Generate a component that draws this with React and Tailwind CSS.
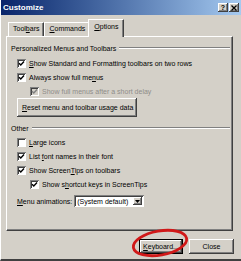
import React from 'react';

// raised / sunken bevels in the Windows classic style
const raised = 'shadow-[inset_-1px_-1px_0_#404040,inset_1px_1px_0_#ffffff,inset_-2px_-2px_0_#808080]';
const sunken = 'shadow-[inset_1px_1px_0_#808080,inset_-1px_-1px_0_#ffffff,inset_2px_2px_0_#404040]';

function Check({ checked, disabled }) {
  return (
    <span
      className={`w-[9px] h-[9px] shrink-0 flex items-center justify-center ${sunken} ${
        disabled ? 'bg-[#d4d0c8]' : 'bg-white'
      }`}
    >
      {checked && (
        <svg width="7" height="7" viewBox="0 0 7 7">
          <path
            d="M1 3.2 L2.8 5 L6 1.6"
            fill="none"
            stroke={disabled ? '#808080' : '#000000'}
            strokeWidth="1.4"
          />
        </svg>
      )}
    </span>
  );
}

function CheckRow({ checked, disabled, indent, children }) {
  return (
    <div className={`h-[14px] flex items-center gap-[3px] ${indent ? 'ml-[19px]' : 'ml-[6px]'}`}>
      <Check checked={checked} disabled={disabled} />
      <span className={disabled ? 'text-[#8f8d88]' : 'text-black'}>{children}</span>
    </div>
  );
}

function Heading({ children }) {
  return (
    <div className="h-[12px] flex items-center gap-[3px] pr-[2px]">
      <span>{children}</span>
      <span className="flex-1 h-[2px] border-t border-t-[#808080] border-b border-b-white" />
    </div>
  );
}

function Tab({ selected, children }) {
  return selected ? (
    <div className="relative z-10 -mx-[2px] -mb-px h-[18px] px-[5px] pt-[3px] bg-[#d4d0c8] border-t border-l border-white border-r border-r-[#404040] shadow-[inset_-1px_0_0_#808080]">
      {children}
    </div>
  ) : (
    <div className="h-[14px] px-[4px] pt-[2px] border-t border-l border-white border-r border-r-[#404040] shadow-[inset_-1px_0_0_#808080]">
      {children}
    </div>
  );
}

export default function App() {
  return (
    <div className="relative w-[241px] h-[261px] overflow-hidden bg-[#d4d0c8] font-['Liberation_Sans',Arial,sans-serif] text-[7px] leading-none text-black border-l border-l-white border-b-2 border-b-[#404040]">
      {/* ── Title bar ─────────────────────────── */}
      <div className="h-[15px] flex items-center pl-[2px] pr-[2px] bg-gradient-to-r from-[#0a246a] to-[#a6caf0]">
        <span className="flex-1 text-white font-bold text-[8px]">Customize</span>
        <div className="flex">
          <span className={`w-[10px] h-[9px] bg-[#d4d0c8] ${raised} flex items-center justify-center font-bold text-[7px]`}>?</span>
          <span className={`w-[10px] h-[9px] ml-[1px] bg-[#d4d0c8] ${raised} flex items-center justify-center`}>
            <svg width="6" height="6" viewBox="0 0 6 6">
              <path d="M0.5 0.5 L5.5 5.5 M5.5 0.5 L0.5 5.5" stroke="#000" strokeWidth="1.3" />
            </svg>
          </span>
        </div>
      </div>

      {/* ── Tabs ──────────────────────────────── */}
      <div className="flex items-end h-[21px] pl-[7px]">
        <Tab>Tool<u>b</u>ars</Tab>
        <Tab><u>C</u>ommands</Tab>
        <Tab selected><u>O</u>ptions</Tab>
      </div>

      {/* ── Panel ─────────────────────────────── */}
      <div className="ml-[5px] w-[227px] h-[195px] flex flex-col pl-[4px] pt-[5px] border border-t-white border-l-white border-r-[#404040] border-b-[#404040] shadow-[inset_-1px_-1px_0_#808080]">
        <Heading>Personalized Menus and Toolbars</Heading>
        <div className="mt-[2px]">
          <CheckRow checked><u>S</u>how Standard and Formatting toolbars on two rows</CheckRow>
          <CheckRow checked>Always show full me<u>n</u>us</CheckRow>
          <CheckRow checked disabled indent>Show full menus after a short delay</CheckRow>
        </div>
        <button className={`ml-[6px] w-[120px] h-[19px] bg-[#d4d0c8] ${raised} text-left pl-[5px] text-[7px]`}>
          <u>R</u>eset menu and toolbar usage data
        </button>

        <div className="mt-[5px]">
          <Heading>Other</Heading>
        </div>
        <div className="mt-[1px]">
          <CheckRow><u>L</u>arge icons</CheckRow>
          <CheckRow checked>List <u>f</u>ont names in their font</CheckRow>
          <CheckRow checked>Show Screen<u>T</u>ips on toolbars</CheckRow>
          <CheckRow checked indent>Show s<u>h</u>ortcut keys in ScreenTips</CheckRow>
        </div>

        <div className="mt-[4px] ml-[6px] h-[12px] flex items-center gap-[2px]">
          <span><u>M</u>enu animations:</span>
          <div className={`w-[70px] h-[12px] bg-white ${sunken} flex items-center pl-[3px] pr-[2px]`}>
            <span className="flex-1">(System default)</span>
            <span className={`w-[9px] h-[8px] bg-[#d4d0c8] ${raised} flex items-center justify-center`}>
              <svg width="5" height="3" viewBox="0 0 5 3">
                <path d="M0 0 H5 L2.5 3 Z" fill="#000" />
              </svg>
            </span>
          </div>
        </div>
      </div>

      {/* ── Buttons ───────────────────────────── */}
      <div className="flex justify-end gap-[6px] pr-[7px] mt-[8px]">
        <button className={`w-[44px] h-[15px] bg-[#d4d0c8] border border-black ${raised} text-[7px]`}>
          <u>K</u>eyboard...
        </button>
        <button className={`w-[45px] h-[15px] bg-[#d4d0c8] ${raised} text-[7px]`}>Close</button>
      </div>

      {/* red annotation round the Keyboard button */}
      <svg className="absolute left-[126px] top-[224px]" width="66" height="36" viewBox="0 0 66 36">
        <ellipse cx="33" cy="19" rx="27" ry="12" transform="rotate(-10 33 19)" fill="none" stroke="#d01818" strokeWidth="2.8" />
      </svg>
    </div>
  );
}
